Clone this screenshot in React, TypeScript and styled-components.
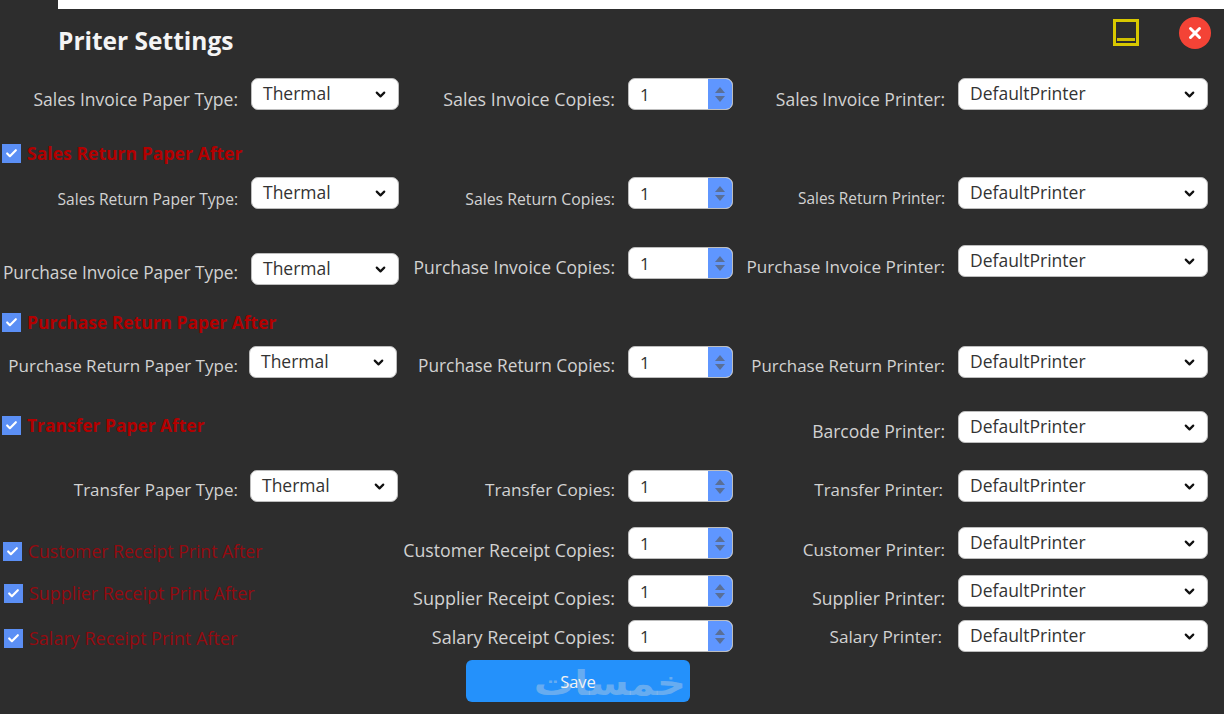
import React from "react";
import styled, { createGlobalStyle } from "styled-components";
import { ChevronDown, Check, X } from "lucide-react";

const Global = createGlobalStyle`
  html, body { margin: 0; padding: 0; background: #2d2d2d; overflow: hidden; }
  body { font-family: "Open Sans", "Noto Sans", sans-serif; }
`;

const Page = styled.div`
  width: 1224px;
  height: 714px;
  background: #2d2d2d;
  display: flex;
  flex-direction: column;
  overflow: hidden;
`;
const TopStrip = styled.div`
  height: 9px;
  margin-left: 58px;
  background: #ffffff;
  flex: none;
`;
const Header = styled.header`
  height: 69px;
  flex: none;
  display: flex;
  align-items: flex-start;
  padding-left: 58px;
`;
const Title = styled.h1`
  margin: 13px 0 0;
  font-size: 24.5px;
  line-height: 38px;
  font-weight: 700;
  color: #f4f4f4;
  flex: 1;
`;
const MinButton = styled.div`
  width: 26px;
  height: 27px;
  box-sizing: border-box;
  margin-top: 10px;
  border: 3px solid #d8c800;
  display: flex;
  align-items: flex-end;
  justify-content: center;
  padding: 0 1px 2px;
`;
const MinBar = styled.span`
  display: block;
  width: 100%;
  height: 3px;
  background: #d0c000;
`;
const CloseButton = styled.div`
  width: 32px;
  height: 32px;
  margin: 8px 13px 0 40px;
  border-radius: 50%;
  background: #f44336;
  color: #fff;
  display: flex;
  align-items: center;
  justify-content: center;
`;
const Row = styled.div<{ $h: number }>`
  height: ${(p) => p.$h}px;
  flex: none;
  display: grid;
  grid-template-columns: 399px 334px 475px;
  align-items: start;
`;
const Cell = styled.div<{ $top?: number; $end?: number; $gap?: number }>`
  margin-top: ${(p) => p.$top ?? 0}px;
  padding-right: ${(p) => p.$end ?? 0}px;
  display: flex;
  justify-content: flex-end;
  align-items: flex-start;
  gap: ${(p) => p.$gap ?? 13}px;
  min-width: 0;
`;
const Label = styled.label<{ $size?: number; $top?: number }>`
  margin-top: ${(p) => p.$top ?? 7}px;
  font-size: ${(p) => p.$size ?? 17.5}px;
  line-height: 26px;
  color: #d2d2d2;
  white-space: nowrap;
`;
const Select = styled.div<{ $w: number }>`
  width: ${(p) => p.$w}px;
  height: 32px;
  box-sizing: border-box;
  flex: none;
  padding: 0 10px 0 11px;
  border-radius: 7px;
  border: 1px solid #bdbdbd;
  background: #fff;
  color: #333;
  display: flex;
  align-items: center;
  justify-content: space-between;
  font-size: 17.5px;
  line-height: 26px;
`;
const SelectText = styled.span`
  margin-top: -2px;
`;
const Spinner = styled.div`
  width: 105px;
  height: 32px;
  box-sizing: border-box;
  flex: none;
  border-radius: 7px;
  border: 1px solid #bdbdbd;
  background: #fff;
  color: #333;
  display: flex;
  overflow: hidden;
  font-size: 17px;
`;
const SpinValue = styled.span`
  flex: 1;
  padding-left: 11px;
  line-height: 31px;
`;
const SpinButtons = styled.span`
  width: 24px;
  background: #5f96ff;
  display: flex;
  flex-direction: column;
  align-items: center;
  justify-content: center;
  gap: 3px;
`;
const Tri = styled.span<{ $up?: boolean }>`
  width: 0;
  height: 0;
  border-left: 5px solid transparent;
  border-right: 5px solid transparent;
  ${(p) => (p.$up ? "border-bottom" : "border-top")}: 6px solid #5a6f96;
`;
const CheckLine = styled.div<{ $left: number; $top?: number }>`
  margin: ${(p) => p.$top ?? 0}px 0 0 ${(p) => p.$left}px;
  display: flex;
  align-items: center;
  gap: 6px;
  justify-self: start;
`;
const Box = styled.span`
  width: 19px;
  height: 19px;
  flex: none;
  background: #5b8ff5;
  color: #fff;
  display: flex;
  align-items: center;
  justify-content: center;
`;
const CheckText = styled.span<{ $bold?: boolean; $size?: number }>`
  font-size: ${(p) => p.$size ?? 17.6}px;
  line-height: 19px;
  font-weight: ${(p) => (p.$bold ? 700 : 400)};
  color: ${(p) => (p.$bold ? "#b30000" : "#950a10")};
  white-space: nowrap;
`;
const Footer = styled.div`
  flex: none;
  padding-left: 466px;
`;
const SaveButton = styled.button`
  position: relative;
  width: 224px;
  height: 42px;
  padding: 0;
  border: none;
  border-radius: 6px;
  background: #2491fb;
  color: #f2f2f2;
  font: 16.5px "Open Sans", sans-serif;
  overflow: hidden;
`;
const SaveText = styled.span`
  position: relative;
  z-index: 1;
`;
const Watermark = styled.span`
  position: absolute;
  right: 4px;
  top: 0;
  font: 700 34px "DejaVu Sans", sans-serif;
  line-height: 46px;
  color: rgba(170, 200, 230, 0.5);
  white-space: nowrap;
  direction: rtl;
  transform: scaleX(1.18);
  transform-origin: right center;
`;

const Pick = ({ w, value }: { w: number; value: string }) => (
  <Select $w={w}>
    <SelectText>{value}</SelectText>
    <ChevronDown size={15} strokeWidth={3.5} color="#111" />
  </Select>
);
const Copies = () => (
  <Spinner>
    <SpinValue>1</SpinValue>
    <SpinButtons>
      <Tri $up />
      <Tri />
    </SpinButtons>
  </Spinner>
);
const Flag = ({ left, top, text, bold, size }: { left: number; top?: number; text: string; bold?: boolean; size?: number }) => (
  <CheckLine $left={left} $top={top}>
    <Box>
      <Check size={13} strokeWidth={4} />
    </Box>
    <CheckText $bold={bold} $size={size}>{text}</CheckText>
  </CheckLine>
);
const Field = ({ label, top, labelTop, size, end, gap, children }: { label: string; top?: number; labelTop?: number; size?: number; end?: number; gap?: number; children: React.ReactNode }) => (
  <Cell $top={top} $end={end} $gap={gap}>
    <Label $size={size} $top={labelTop}>{label}</Label>
    {children}
  </Cell>
);

export default function App() {
  return (
    <Page>
      <Global />
      <TopStrip />
      <Header>
        <Title>Priter Settings</Title>
        <MinButton><MinBar /></MinButton>
        <CloseButton><X size={18} strokeWidth={4} /></CloseButton>
      </Header>

      <Row $h={66}>
        <Field labelTop={8} label="Sales Invoice Paper Type:"><Pick w={148} value="Thermal" /></Field>
        <Field labelTop={8} size={17.9} label="Sales Invoice Copies:"><Copies /></Field>
        <Field labelTop={8} label="Sales Invoice Printer:"><Pick w={250} value="DefaultPrinter" /></Field>
      </Row>
      <Row $h={33}><Flag left={2} text="Sales Return Paper After" bold /></Row>
      <Row $h={68}>
        <Field size={15.6} labelTop={9} label="Sales Return Paper Type:"><Pick w={148} value="Thermal" /></Field>
        <Field size={15.8} labelTop={9} label="Sales Return Copies:"><Copies /></Field>
        <Field size={15.4} labelTop={9} label="Sales Return Printer:"><Pick w={250} value="DefaultPrinter" /></Field>
      </Row>
      <Row $h={67}>
        <Field top={8} size={17.3} label="Purchase Invoice Paper Type:"><Pick w={148} value="Thermal" /></Field>
        <Field top={2} label="Purchase Invoice Copies:"><Copies /></Field>
        <Field labelTop={9} size={17.15} label="Purchase Invoice Printer:"><Pick w={250} value="DefaultPrinter" /></Field>
      </Row>
      <Row $h={34}><Flag left={2} top={1} size={17.45} text="Purchase Return Paper After" bold /></Row>
      <Row $h={65}>
        <Field end={2} gap={11} size={17.05} label="Purchase Return Paper Type:"><Pick w={148} value="Thermal" /></Field>
        <Field size={17.3} label="Purchase Return Copies:"><Copies /></Field>
        <Field size={16.9} label="Purchase Return Printer:"><Pick w={250} value="DefaultPrinter" /></Field>
      </Row>
      <Row $h={59}>
        <Flag left={2} top={5} size={17.4} text="Transfer Paper After" bold />
        <span />
        <Field label="Barcode Printer:"><Pick w={250} value="DefaultPrinter" /></Field>
      </Row>
      <Row $h={57}>
        <Field end={1} gap={12} size={17} label="Transfer Paper Type:"><Pick w={148} value="Thermal" /></Field>
        <Field size={17.2} label="Transfer Copies:"><Copies /></Field>
        <Field gap={15} size={16.85} label="Transfer Printer:"><Pick w={250} value="DefaultPrinter" /></Field>
      </Row>
      <Row $h={48}>
        <Flag left={3} top={15} text="Customer Receipt Print After" />
        <Field labelTop={10} size={17.75} label="Customer Receipt Copies:"><Copies /></Field>
        <Field labelTop={10} size={17.15} label="Customer Printer:"><Pick w={250} value="DefaultPrinter" /></Field>
      </Row>
      <Row $h={45}>
        <Flag left={4} top={9} size={17.9} text="Supplier Receipt Print After" />
        <Field labelTop={10} size={18} label="Supplier Receipt Copies:"><Copies /></Field>
        <Field labelTop={10} label="Supplier Printer:"><Pick w={250} value="DefaultPrinter" /></Field>
      </Row>
      <Row $h={40}>
        <Flag left={4} top={9} size={18} text="Salary Receipt Print After" />
        <Field labelTop={4} size={18} label="Salary Receipt Copies:"><Copies /></Field>
        <Field labelTop={4} gap={16} size={17.2} label="Salary Printer:"><Pick w={250} value="DefaultPrinter" /></Field>
      </Row>
      <Footer>
        <SaveButton>
          <SaveText>Save</SaveText>
          <Watermark>خمسات</Watermark>
        </SaveButton>
      </Footer>
    </Page>
  );
}
